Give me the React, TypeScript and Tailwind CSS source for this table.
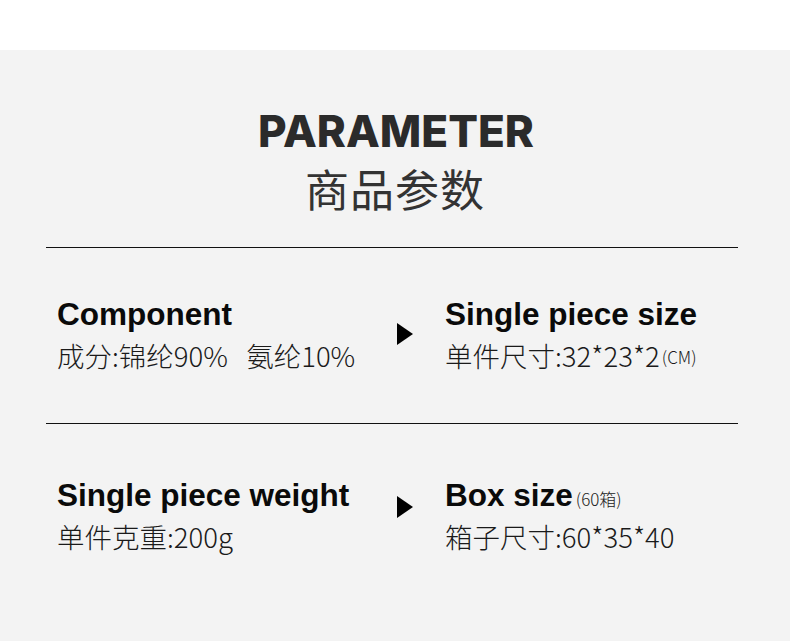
import React from "react";

const cjk = "font-['Noto_Sans_CJK_SC','Noto_Sans',sans-serif]";
const en = "font-['Liberation_Sans',Arial,sans-serif]";

function Tri({ className }: { className?: string }) {
  return (
    <svg width="16" height="22" viewBox="0 0 16 22" className={`block ${className ?? ""}`}>
      <polygon points="0,0 16,11 0,22" fill="#000" />
    </svg>
  );
}

function Item({ title, small, value, valueSmall }: { title: string; small?: string; value: string; valueSmall?: string }) {
  return (
    <div className="flex flex-col">
      <div className={`${en} font-bold text-[31.5px] leading-[36px] text-[#0a0a0a] flex items-end`}>
        <span>{title}</span>
        {small && <span className={`${cjk} font-light text-[17px] leading-[24px] text-[#222] ml-[3px] mb-[2px]`}>{small}</span>}
      </div>
      <div className={`${cjk} font-light text-[27.5px] leading-[34px] text-[#1a1a1a] mt-[6px] flex items-end whitespace-pre`}>
        <span>{value}</span>
        {valueSmall && <span className="text-[17px] leading-[24px] mb-[3px] ml-[2px]">{valueSmall}</span>}
      </div>
    </div>
  );
}

function Row({ left, right, className, triClass }: { left: React.ReactNode; right: React.ReactNode; className?: string; triClass?: string }) {
  return (
    <div className={`flex items-center ${className ?? ""}`}>
      <div className="w-[340px] ml-[57px]">{left}</div>
      <Tri className={triClass} />
      <div className="ml-[32px]">{right}</div>
    </div>
  );
}

export default function App() {
  return (
    <div className="w-[790px] h-[644px] bg-white overflow-hidden">
      <div className="mt-[50px] h-[591px] bg-[#f3f3f3] flex flex-col">
        <div className="flex flex-col items-center pt-[56px]">
          <div className="font-['Inter',sans-serif] font-extrabold text-[44px] leading-[50px] text-[#2b2b2b] ml-[2px]">
            PARAMETER
          </div>
          <div className={`${cjk} font-normal text-[44px] leading-[56px] text-[#333] tracking-[1px] mt-[4px]`}>商品参数</div>
        </div>
        <div className="ml-[46px] w-[692px] h-px bg-[#111] mt-[31px]" />
        <Row
          className="mt-[48px]"
          left={<Item title="Component" value={"成分:锦纶90%   氨纶10%"} />}
          right={<Item title="Single piece size" value="单件尺寸:32*23*2" valueSmall="(CM)" />}
        />
        <div className="ml-[46px] w-[692px] h-px bg-[#111] mt-[51px]" />
        <Row
          className="mt-[53px]"
          triClass="mb-[16px]"
          left={<Item title="Single piece weight" value="单件克重:200g" />}
          right={<Item title="Box size" small="(60箱)" value="箱子尺寸:60*35*40" />}
        />
      </div>
    </div>
  );
}
